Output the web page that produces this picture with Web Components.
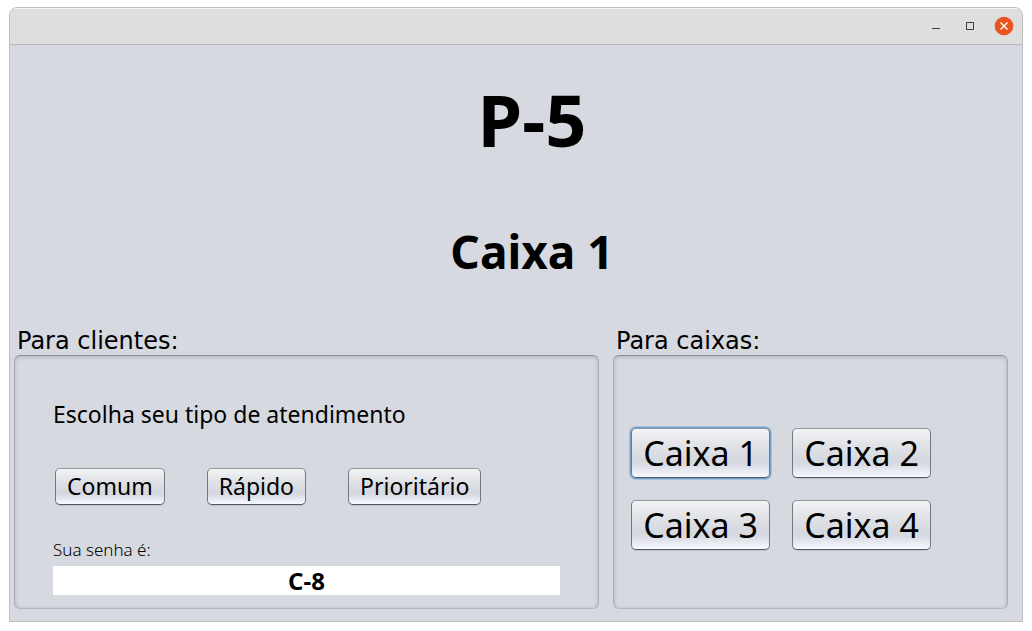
<!DOCTYPE html>
<html lang="pt-BR">
<head>
<meta charset="utf-8">
<meta name="viewport" content="width=device-width, initial-scale=1">
<title>Atendimento</title>
<style>
  html { height: 100%; }
  body {
    box-sizing: border-box;
    min-height: 100%;
    margin: 0;
    padding: 7px 9px 9px;
    display: grid;
    background: #fff;
    color: #000;
    font-family: "Noto Sans", "DejaVu Sans", sans-serif;
  }
</style>
</head>
<body>
<app-window>
  <queue-display senha="P-5" caixa="Caixa 1"></queue-display>
  <group-panel slot="panels" heading="Para clientes:">
    <ticket-form></ticket-form>
  </group-panel>
  <group-panel slot="panels" heading="Para caixas:">
    <counter-grid></counter-grid>
  </group-panel>
</app-window>

<script>
const define = (name, html, setup) => {
  const template = document.createElement('template');
  template.innerHTML = html;
  customElements.define(name, class extends HTMLElement {
    constructor() {
      super();
      this.attachShadow({ mode: 'open' }).append(template.content.cloneNode(true));
    }
    connectedCallback() {
      if (setup) setup(this, this.shadowRoot);
    }
  });
};

define('title-bar', `
  <style>
    :host {
      box-sizing: border-box;
      display: flex;
      justify-content: flex-end;
      align-items: center;
      gap: 14px;
      height: 37px;
      padding: 0 8px;
      background: #dedede;
      border-bottom: 1px solid #b9b9b9;
      box-shadow: inset 0 1px #f5f5f5;
    }
    button { display: block; width: 20px; height: 20px; margin: 0; padding: 0; border: 0; background: none; }
    svg { display: block; }
  </style>
  <button aria-label="Minimizar"><svg width="20" height="20"><path d="M6 12.500h8" stroke="#3d3d3d" fill="none"/></svg></button>
  <button aria-label="Maximizar"><svg width="20" height="20"><path d="M6.500 6.500h7v7h-7z" stroke="#3d3d3d" fill="none"/></svg></button>
  <button aria-label="Fechar"><svg width="20" height="20"><circle cx="10" cy="10" r="9.300" fill="#e95420"/><path d="M6.500 6.500l7 7M13.500 6.500l-7 7" stroke="#fff" stroke-width="1.400" fill="none"/></svg></button>
`);

define('app-window', `
  <style>
    :host {
      display: flex;
      flex-direction: column;
      border: 1px solid #bfbfbf;
      border-radius: 8px 8px 0 0;
      background: #d6d9e0;
      overflow: hidden;
    }
    main { flex: 1; display: flex; flex-direction: column; padding: 0 14px 12px 4px; }
    .panels {
      flex: 1;
      display: grid;
      grid-template-columns: 585fr 395fr;
      gap: 14px;
    }
  </style>
  <title-bar></title-bar>
  <main>
    <slot></slot>
    <div class="panels"><slot name="panels"></slot></div>
  </main>
`);

define('queue-display', `
  <style>
    :host { display: block; padding: 26px 0 44px 42px; text-align: center; font-weight: 700; }
    h1, h2 { margin: 0; font-weight: inherit; }
    h1 { font-size: 72px; line-height: 96px; }
    h2 { margin-top: 52px; font-size: 46px; line-height: 64px; }
  </style>
  <h1></h1>
  <h2></h2>
`, (host, root) => {
  root.querySelector('h1').textContent = host.getAttribute('senha');
  root.querySelector('h2').textContent = host.getAttribute('caixa');
});

define('group-panel', `
  <style>
    :host { display: flex; flex-direction: column; min-width: 0; }
    h3 {
      margin: 0 0 0 3px;
      font: 400 24px/28px "DejaVu Sans", sans-serif;
    }
    section {
      flex: 1;
      box-sizing: border-box;
      border: 1px solid #a9acb1;
      border-top-color: #8c8f94;
      border-bottom-color: #b5b8bd;
      border-radius: 6px;
      box-shadow: inset 0 1px 4px #0000002e;
    }
  </style>
  <h3 id="heading"></h3>
  <section aria-labelledby="heading"><slot></slot></section>
`, (host, root) => {
  root.querySelector('h3').textContent = host.getAttribute('heading');
});

define('push-button', `
  <style>
    :host { display: block; }
    button {
      display: block;
      box-sizing: border-box;
      width: 100%;
      margin: 0;
      padding: 0 11px;
      border: 1px solid;
      border-color: #93969b #75787d #55585d;
      border-radius: 5px;
      background: linear-gradient(#f3f4f6, #e0e2e6 35%, #d5d8df 65%, #d9dce4 75%, #f7f9ff);
      box-shadow: 0 1px #0000001c;
      color: inherit;
      font: inherit;
      white-space: nowrap;
      outline: none;
    }
    :host([focused]) button { box-shadow: 0 0 0 1px #6fa0cf, 0 0 0 2px #8db1d6aa; }
  </style>
  <button><slot></slot></button>
`);

define('ticket-form', `
  <style>
    :host { display: block; padding: 38px 38px 12px; }
    p { margin: 0; font-size: 23px; line-height: 40px; }
    .types {
      display: flex;
      gap: 42px;
      margin: 34px 0 33px 2px;
      font-size: 23px;
      line-height: 35px;
    }
    label { display: block; font-size: 17px; line-height: 24px; font-weight: 300; }
    input {
      display: block;
      box-sizing: border-box;
      width: 100%;
      height: 29px;
      margin: 4px 0 0;
      padding: 0;
      border: 0;
      background: #fff;
      color: inherit;
      font: 700 24px/29px "Noto Sans", sans-serif;
      text-align: center;
    }
  </style>
  <p>Escolha seu tipo de atendimento</p>
  <div class="types">
    <push-button>Comum</push-button>
    <push-button>Rápido</push-button>
    <push-button>Prioritário</push-button>
  </div>
  <label for="senha">Sua senha é:</label>
  <input id="senha" value="C-8" readonly>
`);

define('counter-grid', `
  <style>
    :host {
      display: grid;
      grid-template-columns: repeat(2, minmax(0, 139px));
      gap: 22px;
      padding: 72px 17px 16px;
      font-size: 34px;
      line-height: 48px;
    }
  </style>
  <push-button focused>Caixa 1</push-button>
  <push-button>Caixa 2</push-button>
  <push-button>Caixa 3</push-button>
  <push-button>Caixa 4</push-button>
`);
</script>
</body>
</html>
